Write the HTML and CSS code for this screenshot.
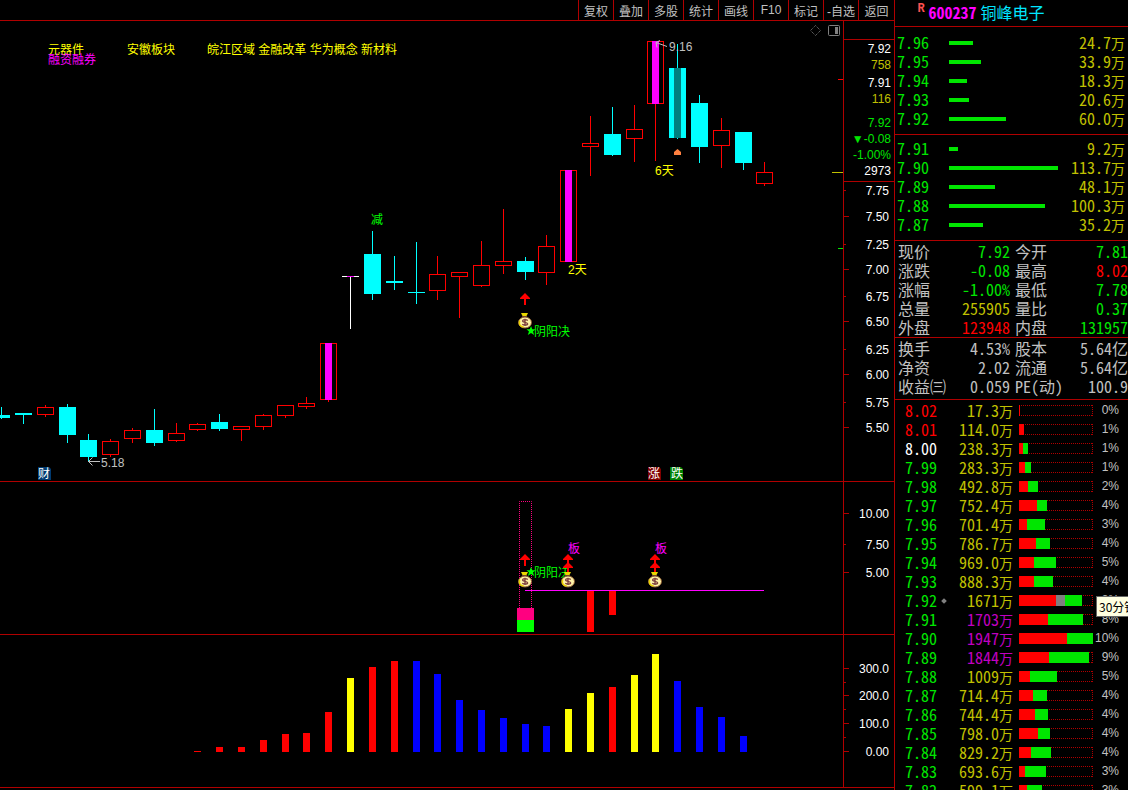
FILE: index.html
```
<!DOCTYPE html>
<html lang="zh-CN">

<head>
    <meta charset="UTF-8">
    <meta name="viewport" content="width=device-width, initial-scale=1.0">
    <title>铜峰电子 600237</title>
    <link rel="stylesheet" href="styles.css">
</head>

<body>
    <div class="app">
        <main class="main">
            <nav class="toolbar">
                <button type="button">复权</button>
                <button type="button">叠加</button>
                <button type="button">多股</button>
                <button type="button">统计</button>
                <button type="button">画线</button>
                <button type="button">F10</button>
                <button type="button">标记</button>
                <button type="button">-自选</button>
                <button type="button">返回</button>
            </nav>

            <section class="panel panel-k">
                <svg class="chart" id="k-chart">
                    <g transform="translate(0 -21)">
                        <g id="candles"></g>

                        <text class="yellow" x="48" y="54">元器件</text>
                        <text class="magenta" x="48" y="64">融资融券</text>
                        <text class="yellow" x="127" y="54">安徽板块</text>
                        <text class="yellow" x="207" y="54">皖江区域 金融改革 华为概念 新材料</text>

                        <text class="lime" x="371" y="224">减</text>
                        <text class="yellow" x="568" y="274">2天</text>
                        <text class="yellow" x="655" y="175">6天</text>
                        <text class="gray" x="101" y="467">5.18</text>
                        <path class="pointer" d="M100 461.500H88.500M92.500 457.500L88.500 461.500L92.500 465.500" />
                        <text class="gray" x="669" y="51">9.16</text>
                        <path class="pointer" d="M667 46.500L656 42.500M660 40.500L656 42.500L657 47.500" />
                        <path fill="#ff8040" d="M674 155v-3l3.500 -3l3.500 3v3z" />

                        <use href="#arrow" x="525" y="293" />
                        <text class="lime" x="534" y="336">阴阳决</text>
                        <use href="#bag" x="525" y="313" />
                        <use href="#star" x="531" y="331" />

                        <path fill="#003a70" d="M38 467h11l2 2v11h-13z" />
                        <path fill="#800000" d="M648 467h11l2 2v11h-13z" />
                        <path fill="#008000" d="M670 467h11l2 2v11h-13z" />
                        <text class="white" x="38" y="478">财</text>
                        <text class="white" x="648" y="478">涨</text>
                        <text class="white" x="671" y="478">跌</text>

                        <path class="icon-dash" d="M815.500 25.500l5 5l-5 5l-5 -5z" />
                        <rect class="icon-line" x="828.500" y="25.500" width="11" height="10" rx="1" />
                        <rect fill="#808080" x="835" y="27" width="3" height="7" />
                        <path stroke="#ff0000" d="M838 79.500h5" />
                        <path stroke="#c0c000" d="M832 172.500h11" />
                        <path stroke="#00e600" d="M838 248.500h5" />
                    </g>
                </svg>
                <div class="axis">
                    <div class="quote">
                        <p>7.92</p>
                        <p class="q-vol">758</p>
                        <p class="q-bid">7.91</p>
                        <p class="q-vol">116</p>
                        <p class="q-last q-down">7.92</p>
                        <p class="q-down">▼-0.08</p>
                        <p class="q-down">-1.00%</p>
                        <p>2973</p>
                    </div>
                    <svg class="scale" data-top="182" data-axis="k"></svg>
                </div>
            </section>

            <section class="panel panel-signal">
                <svg class="chart">
                    <defs>
                        <path id="arrow" fill="#ff0000" d="M0 0l5 5v1h-4v6h-2v-6h-4v-1z" />
                        <path id="star" fill="#00ff00" d="M0 -5l1.300 3.300h3.200l-2.500 2.200l1.200 3.500l-3.200 -2l-3.200 2l1.200 -3.500l-2.500 -2.200h3.200z" />
                        <g id="bag">
                            <path fill="#e8d800" d="M-4 0h7l-1.500 3h-4z" />
                            <path fill="#6b3a2a" d="M-3 3h5v1.500h-5z" />
                            <ellipse cx="0" cy="9.500" rx="6.500" ry="5.500" fill="#fff3a8" stroke="#8a5a30" />
                            <path fill="none" stroke="#e8d000" stroke-width="1.500" d="M-5.300 7.500c-1 3.500 0 6 4 6.500" />
                            <path fill="none" stroke="#7a3b3b" stroke-width="1.300" d="M2.800 7.500c-1.500 -1.200 -5 -1.200 -5.300 .5c0 1.800 5.200 1 5.200 3c-.4 1.600 -4 1.500 -5.400 .3M0 5.800v7.200" />
                        </g>
                    </defs>
                    <g transform="translate(0 -482)">
                        <rect class="dotted-bar" x="519.500" y="501.500" width="12" height="107" />
                        <rect fill="#ff0080" x="517" y="608" width="17" height="12" />
                        <rect fill="#00ff00" x="517" y="620" width="17" height="12" />
                        <rect fill="#ff0000" x="587" y="590" width="7" height="42" />
                        <rect fill="#ff0000" x="609" y="590" width="7" height="25" />
                        <path stroke="#ff00ff" d="M525 590.500h239" />

                        <use href="#star" x="531" y="572" />
                        <text class="lime" x="534" y="577">阴阳决</text>
                        <use href="#arrow" x="525" y="554" />
                        <use href="#bag" x="525" y="572" />
                        <use href="#arrow" x="568" y="554" />
                        <use href="#arrow" x="568" y="562" />
                        <use href="#bag" x="568" y="572" />
                        <use href="#arrow" x="655" y="554" />
                        <use href="#arrow" x="655" y="562" />
                        <use href="#bag" x="655" y="572" />
                        <text class="magenta" x="568" y="553">板</text>
                        <text class="magenta" x="655" y="553">板</text>
                    </g>
                </svg>
                <div class="axis">
                    <svg class="scale" data-top="482" data-axis="signal"></svg>
                </div>
            </section>

            <section class="panel panel-power">
                <svg class="chart">
                    <g id="bars" transform="translate(0 -635)"></g>
                </svg>
                <div class="axis">
                    <svg class="scale" data-top="635" data-axis="power"></svg>
                </div>
            </section>
            <div class="bottom"></div>
        </main>

        <aside class="side">
            <header class="stock">
                <sup>R</sup>
                <b>600237</b>
                <h1>铜峰电子</h1>
            </header>

            <table class="orders asks" data-rows="asks"></table>
            <table class="orders bids" data-rows="bids"></table>

            <table class="stats trade">
                <tr><th>现价</th><td class="down">7.92</td><th>今开</th><td class="down">7.81</td></tr>
                <tr><th>涨跌</th><td class="down">-0.08</td><th>最高</th><td class="up">8.02</td></tr>
                <tr><th>涨幅</th><td class="down">-1.00%</td><th>最低</th><td class="down">7.78</td></tr>
                <tr><th>总量</th><td class="vol">255905</td><th>量比</th><td class="down">0.37</td></tr>
                <tr><th>外盘</th><td class="up">123948</td><th>内盘</th><td class="down">131957</td></tr>
            </table>
            <table class="stats finance">
                <tr><th>换手</th><td>4.53%</td><th>股本</th><td>5.64亿</td></tr>
                <tr><th>净资</th><td>2.02</td><th>流通</th><td>5.64亿</td></tr>
                <tr><th>收益㈢</th><td>0.059</td><th>PE(动)</th><td>100.9</td></tr>
            </table>

            <div class="spread-box">
                <table class="spread" id="spread"></table>
                <div class="tip">30分钟</div>
            </div>
        </aside>
    </div>
    <script src="chart.js"></script>
</body>

</html>
```
FILE: styles.css
```
* {
    box-sizing: border-box;
}

body {
    margin: 0;
    background: #000;
    color: #c0c0c0;
    font-family: "Liberation Sans", "Noto Sans CJK SC", sans-serif;
    font-size: 12px;
}

.app {
    display: grid;
    grid-template-columns: minmax(0, 1fr) 234px;
    height: 100vh;
    overflow: hidden;
}

.main {
    display: flex;
    flex-direction: column;
    min-width: 0;
}

/* toolbar */
.toolbar {
    display: flex;
    justify-content: flex-end;
    height: 21px;
    border-bottom: 1px solid #b00000;
}

.toolbar button {
    width: 35px;
    padding: 0;
    border: 0;
    border-left: 1px solid #b00000;
    background: none;
    color: #c0c0c0;
    font: inherit;
    white-space: nowrap;
}

.toolbar button:last-child {
    width: 36px;
}

/* chart panels */
.panel {
    display: flex;
    border-bottom: 1px solid #b00000;
}

.panel-k {
    flex: 1;
    min-height: 0;
}

.panel-signal,
.panel-power {
    flex: 0 0 153px;
}

.bottom {
    height: 2px;
}

.chart {
    flex: 1;
    min-width: 0;
    height: 100%;
    overflow: hidden;
}

.axis {
    display: flex;
    flex-direction: column;
    width: 51px;
    border-left: 1px solid #b00000;
}

.scale {
    flex: 1;
    width: 100%;
    min-height: 0;
}

.scale text {
    fill: #fff;
    text-anchor: end;
}

.quote {
    margin-top: 18px;
    padding: 1px 3px 2px 0;
    border-top: 1px solid #b00000;
    border-bottom: 1px solid #b00000;
    color: #fff;
    line-height: 16px;
    text-align: right;
}

.quote p {
    margin: 0;
}

.quote .q-vol {
    color: #c0c000;
}

.quote .q-bid {
    margin-top: 2px;
}

.quote .q-last {
    margin-top: 8px;
}

.quote .q-down {
    color: #00e600;
}

.yellow {
    fill: #ffff00;
}

.magenta {
    fill: #ff00ff;
}

.lime {
    fill: #00ff00;
}

.gray {
    fill: #c0c0c0;
}

.white {
    fill: #fff;
}

.pointer {
    fill: none;
    stroke: #c0c0c0;
}

.icon-line {
    fill: none;
    stroke: #808080;
}

.icon-dash {
    fill: none;
    stroke: #808080;
    stroke-dasharray: 1 1;
}

.dotted-bar {
    fill: none;
    stroke: #ff0080;
    stroke-dasharray: 1 1;
    stroke-dashoffset: 0.5;
}

/* side column */
.side {
    border-left: 1px solid #b00000;
    overflow: hidden;
    font-family: "Noto Sans CJK SC", sans-serif;
    font-size: 16px;
    line-height: 19px;
    font-feature-settings: "hwid";
}

.stock {
    display: flex;
    justify-content: center;
    gap: 4px;
    height: 27px;
    padding-top: 3px;
    padding-right: 64px;
    padding-left: 3px;
    border-bottom: 1px solid #b00000;
    white-space: nowrap;
}

.stock sup {
    color: #ff5050;
    font-family: "Liberation Mono", monospace;
    font-size: 12px;
    font-weight: bold;
    line-height: 12px;
}

.stock b {
    color: #ff00ff;
}

.stock h1 {
    margin: 0;
    color: #00e6ff;
    font-size: 16px;
    font-weight: normal;
    line-height: 19px;
}

table {
    width: 100%;
    border-collapse: separate;
    border-spacing: 0;
    table-layout: fixed;
}

td,
th {
    height: 19px;
    padding: 0;
    font-weight: normal;
    white-space: nowrap;
}

.orders {
    border-bottom: 1px solid #b00000;
}

.asks {
    padding: 6px 0;
}

.bids {
    padding: 4px 0 6px;
}

.orders .price {
    width: 54px;
    padding-left: 2px;
}

.orders .amount {
    width: 68px;
    padding-right: 3px;
}

.price {
    color: #00e600;
    text-align: left;
}

.amount {
    color: #c0c000;
    text-align: right;
}

.amount small {
    font-size: 14px;
    line-height: 14px;
}

.line {
    height: 4px;
    background: #00e600;
}

.up {
    color: #ff0000;
}

.down {
    color: #00e600;
}

.vol {
    color: #c0c000;
}

.flat {
    color: #fff;
}

.big {
    color: #c000c0;
}

.stats {
    border-bottom: 1px solid #b00000;
}

.trade {
    padding: 1px 0 0;
}

.finance {
    padding: 1px 0 3px;
}

.stats th {
    padding-left: 3px;
    text-align: left;
}

.stats th:first-child {
    width: 50px;
}

.stats th:nth-child(3) {
    width: 54px;
    padding-left: 5px;
}

.stats td {
    text-align: right;
}

.stats td:nth-child(2) {
    width: 65px;
}

/* price distribution */
.spread-box {
    position: relative;
    padding-top: 1px;
}

.spread .price {
    width: 58px;
    padding-left: 10px;
}

.spread .amount {
    width: 60px;
}

.spread .bar {
    padding: 0 0 0 6px;
}

.spread .percent {
    width: 35px;
    padding-right: 9px;
    font-family: "Liberation Sans", sans-serif;
    font-size: 12px;
    text-align: right;
}

.spread .price i {
    display: inline-block;
    width: 4px;
    height: 4px;
    margin: 0 0 4px 5px;
    background: #808080;
    transform: rotate(45deg);
}

.frame {
    display: flex;
    height: 11px;
    background:
        repeating-linear-gradient(90deg, #b00000 0 1px, transparent 1px 2px) top / 100% 1px no-repeat,
        repeating-linear-gradient(90deg, #b00000 0 1px, transparent 1px 2px) bottom / 100% 1px no-repeat,
        repeating-linear-gradient(#b00000 0 1px, transparent 1px 2px) right / 1px 100% no-repeat;
}

.buy {
    background: #ff0000;
}

.even {
    background: #808080;
}

.sell {
    background: #00e600;
}

.tip {
    position: absolute;
    top: 196px;
    left: 201px;
    height: 21px;
    padding: 0 2px;
    border: 1px solid #646464;
    background: #ffffe1;
    color: #000;
    font-size: 12px;
    font-feature-settings: normal;
    white-space: nowrap;
}
```
FILE: chart.js
```
var NS = 'http://www.w3.org/2000/svg';

function add(parent, name, attrs, text) {
    var el = document.createElementNS(NS, name);
    for (var key in attrs) {
        el.setAttribute(key, attrs[key]);
    }
    if (text) {
        el.textContent = text;
    }
    parent.appendChild(el);
}

// x, high, top, bottom, low, type (u = up, d = down), color of the inner strip
var candles = [
    [1, 407, 415, 418, 419, 'd'],
    [23, 413, 413, 415, 424, 'd'],
    [45, 405, 407, 415, 417, 'u'],
    [67, 404, 407, 435, 443, 'd'],
    [88, 434, 440, 457, 462, 'd'],
    [110, 439, 441, 455, 457, 'u'],
    [132, 428, 430, 439, 443, 'u'],
    [154, 409, 430, 443, 446, 'd'],
    [176, 423, 433, 441, 442, 'u'],
    [197, 423, 424, 430, 431, 'u'],
    [219, 414, 422, 429, 431, 'd'],
    [241, 426, 426, 430, 441, 'u'],
    [263, 414, 415, 427, 430, 'u'],
    [285, 405, 405, 416, 418, 'u'],
    [306, 397, 403, 407, 409, 'u'],
    [328, 343, 343, 400, 402, 'u', '#ff00ff'],
    [350, 276, 276, 277, 329, 'w', '#ff00ff'],
    [372, 231, 254, 294, 300, 'd'],
    [394, 256, 281, 283, 290, 'd'],
    [416, 242, 292, 293, 304, 'd'],
    [437, 256, 274, 291, 300, 'u'],
    [459, 272, 272, 277, 318, 'u'],
    [481, 241, 265, 286, 287, 'u'],
    [503, 209, 261, 266, 274, 'u'],
    [525, 257, 261, 272, 280, 'd'],
    [546, 235, 246, 273, 285, 'u'],
    [568, 170, 170, 262, 262, 'u', '#ff00ff'],
    [590, 116, 143, 147, 176, 'u'],
    [612, 107, 134, 155, 156, 'd'],
    [634, 105, 129, 139, 162, 'u'],
    [655, 41, 41, 104, 161, 'u', '#ff00ff'],
    [677, 44, 68, 138, 139, 'd', '#008080'],
    [699, 95, 103, 147, 163, 'd'],
    [721, 118, 130, 146, 168, 'u'],
    [743, 132, 132, 163, 170, 'd'],
    [764, 162, 172, 184, 186, 'u']
];

var colors = { u: '#ff0000', d: '#00ffff', w: '#ffffff' };
var candleGroup = document.querySelector('#candles');

candles.forEach(function(c) {
    var color = colors[c[5]];
    var height = c[3] - c[2];
    add(candleGroup, 'rect', { x: c[0], y: c[1], width: 1, height: c[4] - c[1], fill: color });
    if (c[5] === 'u') {
        add(candleGroup, 'rect', { x: c[0] - 7.5, y: c[2] + 0.5, width: 16, height: height - 1, fill: '#000', stroke: color });
    } else {
        add(candleGroup, 'rect', { x: c[0] - 8, y: c[2], width: 17, height: height, fill: color });
    }
    if (c[6]) {
        add(candleGroup, 'rect', { x: c[0] - 3, y: c[2], width: 7, height: height, fill: c[6] });
    }
});

// bars stand under the candles, starting with the tenth
var bars = [
    [751, 'red'], [747, 'red'], [747, 'red'], [740, 'red'], [734, 'red'], [733, 'red'], [712, 'red'],
    [678, 'yellow'], [667, 'red'], [661, 'red'], [661, 'blue'], [674, 'blue'], [700, 'blue'],
    [710, 'blue'], [718, 'blue'], [724, 'blue'], [726, 'blue'], [709, 'yellow'], [693, 'yellow'],
    [687, 'red'], [675, 'yellow'], [654, 'yellow'], [681, 'blue'], [707, 'blue'], [717, 'blue'], [736, 'blue']
];

bars.forEach(function(bar, i) {
    add(document.querySelector('#bars'), 'rect', {
        x: candles[i + 9][0] - 3, y: bar[0], width: 7, height: 752 - bar[0], fill: bar[1]
    });
});

// y, tick length, label
var axes = {
    k: [
        [190, 2, '7.75'], [216, 5, '7.50'], [244, 2, '7.25'], [269, 5, '7.00'], [296, 2, '6.75'],
        [321, 5, '6.50'], [349, 2, '6.25'], [374, 5, '6.00'], [402, 2, '5.75'], [427, 5, '5.50']
    ],
    signal: [[513, 5, '10.00'], [544, 2, '7.50'], [572, 5, '5.00']],
    power: [
        [668, 5, '300.0'], [682, 2], [695, 5, '200.0'], [709, 2], [723, 5, '100.0'], [737, 2], [751, 5, '0.00']
    ]
};

document.querySelectorAll('.scale').forEach(function(svg) {
    var top = Number(svg.dataset.top);
    axes[svg.dataset.axis].forEach(function(tick) {
        add(svg, 'rect', { x: 0, y: tick[0] - top, width: tick[1], height: 1, fill: '#b00000' });
        if (tick[2]) {
            add(svg, 'text', { x: 45, y: tick[0] - top + 5 }, tick[2]);
        }
    });
});

// price, line width, amount
var orders = {
    asks: [['7.96', 24, '24.7'], ['7.95', 32, '33.9'], ['7.94', 18, '18.3'], ['7.93', 20, '20.6'], ['7.92', 57, '60.0']],
    bids: [['7.91', 9, '9.2'], ['7.90', 109, '113.7'], ['7.89', 46, '48.1'], ['7.88', 96, '100.3'], ['7.87', 34, '35.2']]
};

document.querySelectorAll('.orders').forEach(function(table) {
    table.innerHTML = orders[table.dataset.rows].map(function(row) {
        return '<tr><td class="price">' + row[0] + '</td>' +
            '<td><div class="line" style="width: ' + row[1] + 'px"></div></td>' +
            '<td class="amount">' + row[2] + '<small>万</small></td></tr>';
    }).join('');
});

// price, amount, buy, even, sell, percent
var spread = [
    ['8.02', '17.3', 1, 0, 0, 0],
    ['8.01', '114.0', 5, 0, 0, 1],
    ['8.00', '238.3', 4, 0, 5, 1],
    ['7.99', '283.3', 6, 0, 6, 1],
    ['7.98', '492.8', 9, 0, 10, 2],
    ['7.97', '752.4', 18, 0, 10, 4],
    ['7.96', '701.4', 8, 0, 18, 3],
    ['7.95', '786.7', 17, 0, 14, 4],
    ['7.94', '969.0', 15, 0, 22, 5],
    ['7.93', '888.3', 15, 0, 19, 4],
    ['7.92', '1671', 37, 9, 17, 8],
    ['7.91', '1703', 29, 0, 35, 8],
    ['7.90', '1947', 48, 0, 26, 10],
    ['7.89', '1844', 30, 0, 40, 9],
    ['7.88', '1009', 11, 0, 27, 5],
    ['7.87', '714.4', 14, 0, 14, 4],
    ['7.86', '744.4', 16, 0, 13, 4],
    ['7.85', '798.0', 19, 0, 12, 4],
    ['7.84', '829.2', 12, 0, 20, 4],
    ['7.83', '693.6', 6, 0, 21, 3],
    ['7.82', '599.1', 8, 0, 15, 3]
];

function part(name, value) {
    return value ? '<div class="' + name + '" style="width: ' + (value / 74 * 100) + '%"></div>' : '';
}

document.querySelector('#spread').innerHTML = spread.map(function(row) {
    var priceClass = row[0] > '8.00' ? 'up' : row[0] === '8.00' ? 'flat' : 'down';
    var amountClass = row[1] > 1700 ? 'big' : 'vol';
    return '<tr><td class="price"><span class="' + priceClass + '">' + row[0] + '</span>' +
        (row[3] ? '<i></i>' : '') + '</td>' +
        '<td class="amount"><span class="' + amountClass + '">' + row[1] + '<small>万</small></span></td>' +
        '<td class="bar"><div class="frame">' + part('buy', row[2]) + part('even', row[3]) + part('sell', row[4]) + '</div></td>' +
        '<td class="percent">' + row[5] + '%</td></tr>';
}).join('');
```
